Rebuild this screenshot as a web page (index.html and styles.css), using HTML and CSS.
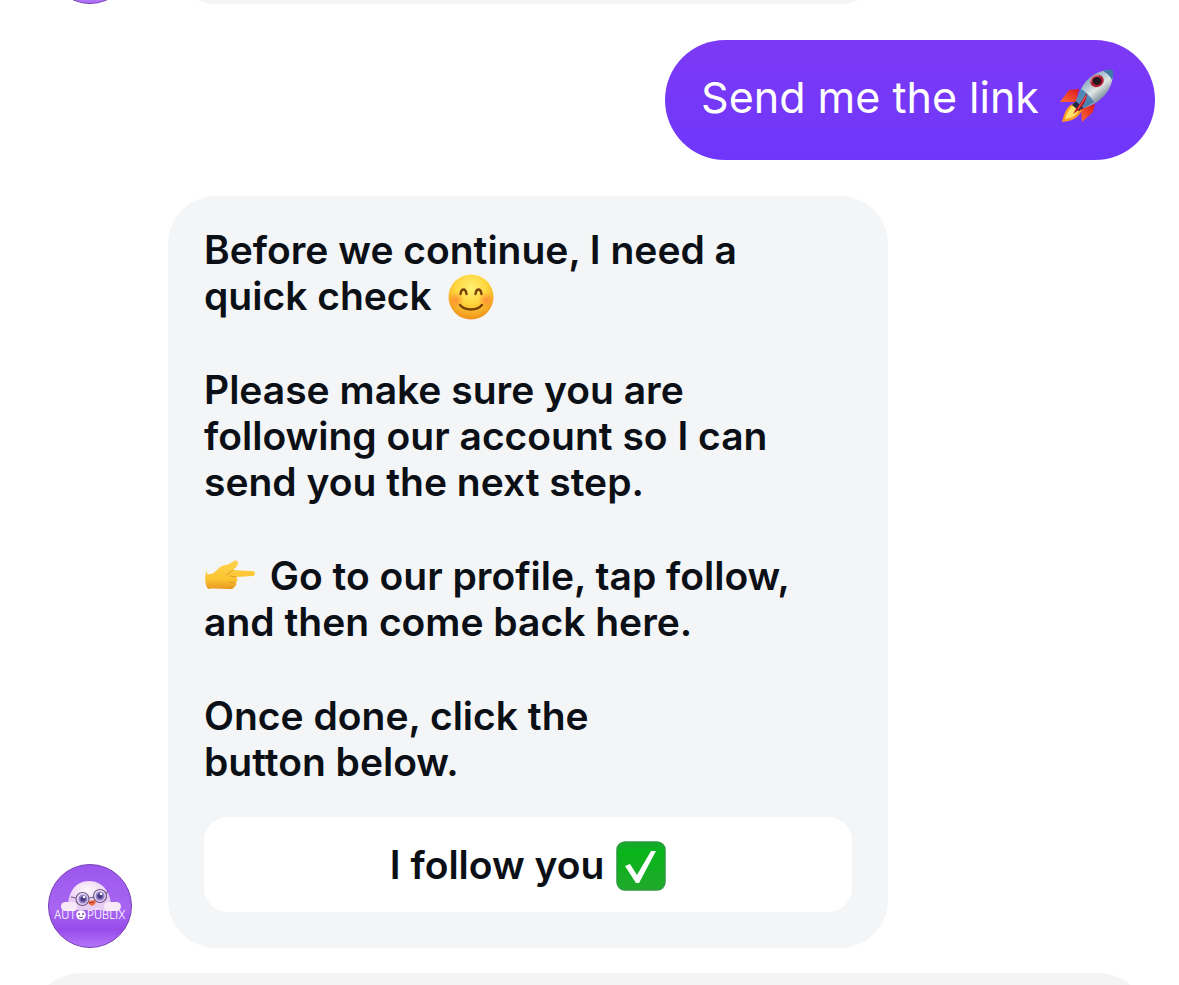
FILE: index.html
```html
<!DOCTYPE html>
<html lang="en">
<head>
<meta charset="utf-8">
<meta name="viewport" content="width=device-width, initial-scale=1">
<title>Conversation</title>
<link rel="stylesheet" href="styles.css">
</head>
<body>
<main class="chat">
  <div class="row row-previous">
    <div class="avatar avatar-plain"></div>
    <div class="card card-previous"></div>
  </div>

  <div class="row row-sent">
    <p class="bubble">Send me the link
      <svg class="rocket" viewBox="0 0 56 56" role="img" aria-label="rocket">
        <defs>
          <linearGradient id="hull" x1="0.2" y1="0.1" x2="0.75" y2="0.8">
            <stop offset="0" stop-color="#668dae"/><stop offset=".35" stop-color="#a9bfce"/><stop offset=".6" stop-color="#e1e6e4"/><stop offset="1" stop-color="#667c8c"/>
          </linearGradient>
          <linearGradient id="fin" x1="0" y1="1" x2="1" y2="0"><stop offset="0" stop-color="#ff6b32"/><stop offset="1" stop-color="#d91521"/></linearGradient>
        </defs>
        <path d="M20 20 10 21 1 33 17 33Z" fill="url(#fin)"/>
        <path d="M36 35 34 43 23 53 22 40Z" fill="url(#fin)"/>
        <path d="M16 34C9 36 6 41 3 53c9-1 16-3 20-12Z" fill="#ff9c24"/>
        <path d="M15 36c-5 3-7 8-9 14 8-1 12-4 14-10Z" fill="#ffe36b"/>
        <path d="m18 31 7 7-5 4-7-6Z" fill="#222b46"/>
        <path d="M54 1C41 0 28 7 22 20l-5 12 8 7c16-5 30-17 29-38Z" fill="url(#hull)"/>
        <path d="M54 1c-3-1-7 0-10 1 4 2 7 5 9 9 2-3 1-7 1-10Z" fill="#4079aa"/>
        <path d="M22 20c4 2 9 7 13 13l-10 6-8-7Z" fill="#286fa9" opacity=".75"/>
        <path d="M28 24 17 40l-3 5c8-5 14-12 14-21Z" fill="#b9132b"/>
        <path d="m27 27-8 13" stroke="#ff6255" stroke-width="1"/>
        <ellipse cx="38" cy="12" rx="7" ry="6" transform="rotate(-28 38 12)" fill="#b71f38"/>
        <ellipse cx="38" cy="12" rx="4.5" ry="4" fill="#24151f"/>
        <path d="M32 13c0-4 4-7 8-6" fill="none" stroke="#f3969d" stroke-width="1"/>
      </svg>
    </p>
  </div>

  <div class="row row-received">
    <svg class="avatar" viewBox="0 0 84 84" role="img" aria-label="Autopüblix">
      <defs>
        <linearGradient id="avatarFill" x1="0" y1="0" x2="0" y2="1"><stop offset="0" stop-color="#9b57ed"/><stop offset=".55" stop-color="#a866f2"/><stop offset=".78" stop-color="#974be9"/><stop offset="1" stop-color="#b676fb"/></linearGradient>
        <radialGradient id="plush" cx=".45" cy=".3"><stop offset="0" stop-color="#fff8fb"/><stop offset="1" stop-color="#e8cdf2"/></radialGradient>
      </defs>
      <circle cx="42" cy="42" r="41.5" fill="url(#avatarFill)" stroke="#7940b5"/>
      <path d="M20 46C19 29 27 17 41 17s23 12 22 29Z" fill="url(#plush)"/>
      <rect x="13" y="38" width="16" height="9" rx="4.5" fill="#f9eafa"/>
      <rect x="56" y="38" width="17" height="9" rx="4.5" fill="#f9eafa"/>
      <circle cx="35" cy="35" r="4.5" fill="#8d80c8"/><circle cx="52" cy="32" r="4.5" fill="#8d80c8"/>
      <circle cx="35" cy="35" r="2.6" fill="#49377f"/><circle cx="52" cy="32" r="2.6" fill="#49377f"/>
      <circle cx="36" cy="33" r="1.2" fill="#fff"/><circle cx="53" cy="30" r="1.2" fill="#fff"/>
      <g fill="none" stroke="#6f5888" stroke-width="1.2"><circle cx="34.5" cy="35" r="6.5"/><circle cx="52" cy="32" r="6.5"/><path d="m41 34 5-1M28 34l-5-1M58 30l2-3"/></g>
      <path d="M40 38c3-2 6-2 8-1-1 6-6 6-8 1Z" fill="#f26b3f"/><path d="m41 39 5-1" stroke="#9c3045"/>
      <g class="avatar-name"><text x="6" y="55">AUT</text><text x="39" y="55">PÜBLIX</text></g>
      <circle cx="33" cy="51" r="4.8" fill="#fff"/><circle cx="31" cy="50" r="1" fill="#7045a3"/><circle cx="35" cy="50" r="1" fill="#7045a3"/><path d="M31 53q2 1.5 4 0" fill="none" stroke="#7045a3"/>
    </svg>

    <article class="card">
      <div class="message">
        <p>Before we continue, I need a<br>quick check
          <svg class="emoji smile" viewBox="0 0 46 46" role="img" aria-label="smiling face">
            <defs><radialGradient id="face" cx=".5" cy=".3" r=".72"><stop offset="0" stop-color="#fff176"/><stop offset=".5" stop-color="#ffd53b"/><stop offset="1" stop-color="#ef8c18"/></radialGradient><radialGradient id="cheek"><stop offset="0" stop-color="#ff7437" stop-opacity=".65"/><stop offset="1" stop-color="#ff7437" stop-opacity="0"/></radialGradient></defs>
            <circle cx="23" cy="23" r="22.5" fill="url(#face)"/>
            <circle cx="8" cy="26" r="8" fill="url(#cheek)"/><circle cx="38" cy="26" r="8" fill="url(#cheek)"/>
            <g fill="none" stroke="#764008" stroke-width="2.3" stroke-linecap="round"><path d="M12.5 20c1-6 5-6 6 0M27.500 20c1-6 5-6 6 0M12 31c5 6 17 6 22 0"/></g>
          </svg>
        </p>
        <p>Please make sure you are<br>following our account so I can<br>send you the next step.</p>
        <p><svg class="emoji hand" viewBox="0 0 52 34" role="img" aria-label="pointing right">
            <defs><linearGradient id="skin" x1="0" y1="0" x2="0" y2="1"><stop offset="0" stop-color="#ffd34e"/><stop offset=".65" stop-color="#fcc430"/><stop offset="1" stop-color="#e99a20"/></linearGradient></defs>
            <path d="M3 14c5 1 8-2 12-6 3-3 7-3 10-4l5-3c2-1 4 0 4 2 0 3-3 5-5 7l19 1c4 0 4 5 0 5l-16 1c2 2 2 4 0 5 1 2 0 4-2 5 0 2-3 2-6 2-7 0-13-1-20 0-3-4-4-13-1-19Z" fill="url(#skin)"/>
            <path d="M29 10c-3 2-4 4-7 5M32 17l-6-1M31 22c-1 1-3 1-5 0M30 27c-1 1-3 1-5 0" fill="none" stroke="#dc9a24" stroke-width="1" stroke-linecap="round"/>
          </svg> Go to our profile, tap follow,<br>and then come back here.</p>
        <p>Once done, click the<br>button below.</p>
      </div>
      <button class="reply" type="button">I follow you
        <svg class="emoji check" viewBox="0 0 50 50" role="img" aria-label="check mark">
          <defs><linearGradient id="tile" x1="0" y1="0" x2="0" y2="1"><stop offset="0" stop-color="#18a72f"/><stop offset=".2" stop-color="#08b51a"/><stop offset="1" stop-color="#20a92b"/></linearGradient></defs>
          <rect x="1" y="1" width="48" height="48" rx="8" fill="url(#tile)" stroke="#2b9a40" stroke-width="1.5"/>
          <path d="m9 25 5-2 7 11L35 10h5L23 42h-3Z" fill="#fff"/>
        </svg>
      </button>
    </article>
  </div>

  <div class="row-next"></div>
</main>
</body>
</html>
```
FILE: styles.css
```css
* {
  box-sizing: border-box;
}

body {
  margin: 0;
  background: #fff;
  color: #0b0f16;
  font-family: Inter, "Liberation Sans", sans-serif;
}

p {
  margin: 0;
}

.chat {
  display: flex;
  flex-direction: column;
  height: 100vh;
  overflow: hidden;
}

.row {
  display: flex;
  flex-shrink: 0;
  align-items: flex-end;
  gap: 36px;
  padding: 0 24px 0 48px;
}

.row-previous {
  height: 4px;
  overflow: hidden;
}

.row-sent {
  justify-content: flex-end;
  margin: 36px 0;
}

.bubble {
  padding: 30px 40px 36px 36px;
  border-radius: 60px;
  background: linear-gradient(#7d39f5, #6f37fb);
  color: #fff;
  font-size: 43px;
  line-height: 54px;
}

.rocket {
  width: 56px;
  height: 56px;
  margin: -6px 0 -6px 8px;
  vertical-align: -6px;
}

.avatar {
  flex: none;
  width: 84px;
  height: 84px;
}

.avatar-plain {
  border: 1px solid #7940b5;
  border-radius: 50%;
  background: #b272f9;
}

.avatar-name {
  fill: #fff;
  font-size: 11px;
  font-weight: 300;
}

.card {
  flex: 0 1 720px;
  padding: 31px 36px 36px;
  border-radius: 48px;
  background: #f3f5f7;
}

.card-previous {
  height: 96px;
  background: #f4f4f5;
}

.message {
  display: flex;
  flex-direction: column;
  gap: 48px;
  margin-bottom: 32px;
  font-size: 39px;
  font-weight: 600;
  line-height: 46px;
}

.emoji {
  margin: -6px 0;
}

.smile {
  width: 46px;
  height: 46px;
  margin-left: 6px;
  vertical-align: -4px;
}

.hand {
  width: 52px;
  height: 34px;
  margin-right: 4px;
  vertical-align: 2px;
}

.check {
  width: 50px;
  height: 50px;
  margin-left: 2px;
  vertical-align: -6px;
}

.reply {
  display: block;
  width: 100%;
  padding: 24px;
  border: 0;
  border-radius: 24px;
  background: #fff;
  color: inherit;
  font: inherit;
  font-size: 39px;
  font-weight: 600;
  line-height: 47px;
}

.row-next {
  flex: 1 0 0;
  margin: 25px 28px -96px;
  border-radius: 60px;
  background: #f4f4f5;
}
```
